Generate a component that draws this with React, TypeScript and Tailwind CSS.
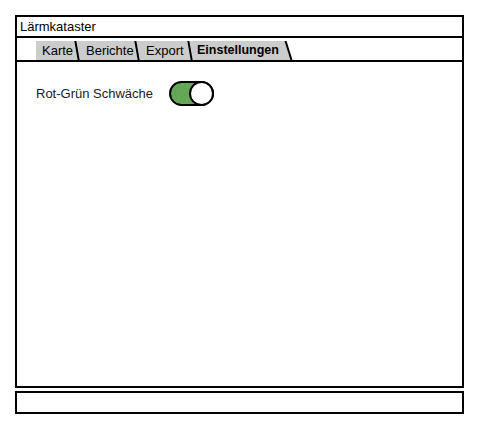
import React from "react";

const tabs = [
  { label: "Karte", w: 44 },
  { label: "Berichte", w: 60 },
  { label: "Export", w: 53 },
];

export default function App() {
  return (
    <div
      className="w-[480px] h-[430px] bg-white pt-[15px] pl-[15px]"
      style={{ fontFamily: '"Liberation Sans", Arial, sans-serif' }}
    >
      <div className="w-[449px] flex flex-col gap-[3px]">
        <div className="h-[373px] border-2 border-black flex flex-col">
          <div className="h-[21px] border-b-2 border-black flex items-center pl-[3px] text-[13px] text-black leading-none">
            Lärmkataster
          </div>
          <div className="h-[24px] border-b-2 border-black flex items-end pl-[19px]">
            {tabs.map((t) => (
              <div
                key={t.label}
                className="relative h-[19px] bg-[#cccccc] flex items-center pl-[6px] text-[13px] text-black leading-none"
                style={{ width: t.w }}
              >
                {t.label}
                <span className="absolute right-[2px] top-0 h-full w-[2px] bg-black skew-x-[10deg]" />
              </div>
            ))}
            <div className="h-[19px] flex">
              <div className="h-[19px] w-[91px] bg-[#cccccc] flex items-center pl-[4px] text-[12.5px] font-bold text-black leading-none">
                Einstellungen
              </div>
              <svg width="9" height="19" viewBox="0 0 9 19" className="block">
                <polygon points="0,0 2,0 8,19 0,19" fill="#cccccc" />
                <line x1="1.5" y1="0" x2="7.5" y2="19" stroke="#000" strokeWidth="2" />
              </svg>
            </div>
          </div>
          <div className="flex-1 pt-[19px] pl-[19px]">
            <div className="flex items-center gap-[16px]">
              <span className="text-[13px] text-[#1a1a1a] leading-none">Rot-Grün Schwäche</span>
              <div className="h-[25px] w-[45px] rounded-full border-2 border-black bg-[#64a757] flex items-center justify-end">
                <div className="h-[25px] w-[25px] -mr-[2px] shrink-0 rounded-full border-2 border-black bg-white" />
              </div>
            </div>
          </div>
        </div>
        <div className="h-[23px] border-2 border-black" />
      </div>
    </div>
  );
}
